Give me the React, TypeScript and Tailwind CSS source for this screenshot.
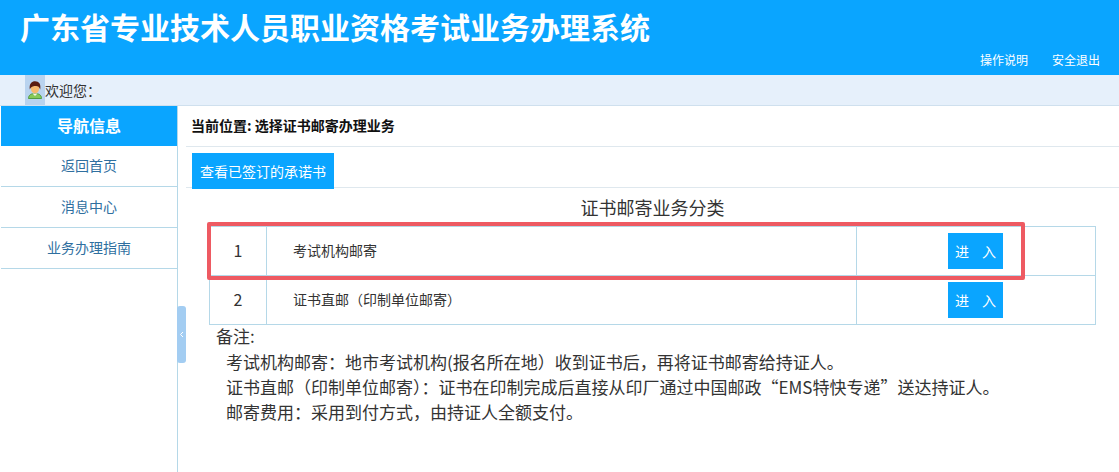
import React from "react";

const navItems = ["返回首页", "消息中心", "业务办理指南"];

const rows = [
  { id: 1, name: "考试机构邮寄" },
  { id: 2, name: "证书直邮（印制单位邮寄）" },
];

const UserIcon = () => (
  <svg width="16" height="20" viewBox="0 0 16 20">
    <path d="M1.500 18.500 C1.500 15 4 13.500 8 13.500 C12 13.500 14.500 15 14.500 18.500 Z" fill="#86c95a" stroke="#3f8f2c" strokeWidth="0.8" />
    <path d="M5.500 13.500 L8 16 L10.500 13.500 Z" fill="#f6f6e6" />
    <ellipse cx="8" cy="8.500" rx="4.200" ry="4.800" fill="#f6b96e" />
    <path d="M2.800 9.500 C1.800 3.500 5 1.200 8 1.200 C12 1.200 14.200 4 13.200 9.500 C12.400 6.500 10.500 5.600 8 6 C6 6.300 4 6.500 2.800 9.500 Z" fill="#5a1c10" />
  </svg>
);

export default function App() {
  return (
    <div className="relative flex h-[472px] w-[1119px] flex-col overflow-hidden bg-white font-['Noto_Sans_CJK_SC','Liberation_Sans',sans-serif]">
      <header className="flex h-[75px] shrink-0 flex-col bg-[#0aa5ff] pr-[19px] pl-5">
        <h1 className="h-[51px] pt-1 text-[30px] leading-[44px] font-bold text-white">
          广东省专业技术人员职业资格考试业务办理系统
        </h1>
        <div className="flex justify-end gap-6 text-xs leading-[17px] text-white">
          <span>操作说明</span>
          <span>安全退出</span>
        </div>
      </header>

      <div className="flex h-[31px] shrink-0 items-center border-b border-[#cfe0ee] bg-[#e6f0fb] pl-[25px]">
        <div className="flex h-full w-5 items-center justify-center bg-[#b9d3ef]">
          <UserIcon />
        </div>
        <span className="text-sm text-[#333]">欢迎您：</span>
      </div>

      <div className="flex min-h-0 flex-1">
        <aside className="relative w-[178px] shrink-0 border-r border-[#b5d8e8] pl-px">
          <div className="flex h-10 items-center justify-center bg-[#0aa5ff] pb-0.5 text-base font-bold text-white">
            导航信息
          </div>
          {navItems.map((item) => (
            <div
              key={item}
              className="flex h-[41px] items-center justify-center border-b border-[#b5d8e8] pb-0.5 text-sm text-[#2f6f9f]"
            >
              {item}
            </div>
          ))}
          <div className="absolute top-[200px] -right-[9px] flex h-[57px] w-[9px] items-center justify-center rounded-[3px] bg-[#a3cdf2]">
            <svg width="5" height="7" viewBox="0 0 5 7">
              <path d="M4 1 L1.500 3.500 L4 6" fill="none" stroke="#fff" strokeWidth="1" />
            </svg>
          </div>
        </aside>

        <main className="min-w-0 flex-1">
          <div className="ml-2 flex h-[41px] items-center border-b border-[#dfe8ee] pb-0.5 pl-[5px] text-sm font-bold text-[#111]">
            当前位置: 选择证书邮寄办理业务
          </div>
          <div className="ml-2 h-[41px] border-b border-[#dfe8ee] pt-1.5 pl-1.5">
            <button className="flex h-9 w-[142px] items-center justify-center bg-[#0aa5ff] text-sm text-white">
              查看已签订的承诺书
            </button>
          </div>
          <h2 className="ml-[31px] h-[38px] w-[887px] pt-[7px] text-center text-lg leading-6 text-[#333]">
            证书邮寄业务分类
          </h2>
          <div className="ml-[31px] w-[887px] border border-b-0 border-[#b5d8e8]">
            {rows.map((row) => (
              <div key={row.id} className="flex h-[49px] border-b border-[#b5d8e8]">
                <div className="flex w-[57px] items-center justify-center border-r border-[#b5d8e8] pb-0.5 text-base text-[#333]">
                  {row.id}
                </div>
                <div className="flex w-[590px] items-center border-r border-[#b5d8e8] pb-0.5 pl-[26px] text-sm text-[#333]">
                  {row.name}
                </div>
                <div className="flex flex-1 items-center pl-[91px]">
                  <button className="flex h-9 w-[55px] items-center justify-center gap-[13px] bg-[#0aa5ff] text-sm text-white">
                    <span>进</span>
                    <span>入</span>
                  </button>
                </div>
              </div>
            ))}
          </div>
          <div className="pl-[38px] text-[17px] leading-[25px] text-[#333]">
            <p className="-mt-0.5">备注:</p>
            <div className="mt-px pl-[10px]">
              <p>考试机构邮寄：地市考试机构(报名所在地）收到证书后，再将证书邮寄给持证人。</p>
              <p>证书直邮（印制单位邮寄）：证书在印制完成后直接从印厂通过中国邮政“EMS特快专递”送达持证人。</p>
              <p>邮寄费用：采用到付方式，由持证人全额支付。</p>
            </div>
          </div>
        </main>
      </div>

      <div className="pointer-events-none absolute top-[222px] left-[207px] h-[58px] w-[818px] rounded-[2px] border-4 border-[#ee5a62]" />
    </div>
  );
}
